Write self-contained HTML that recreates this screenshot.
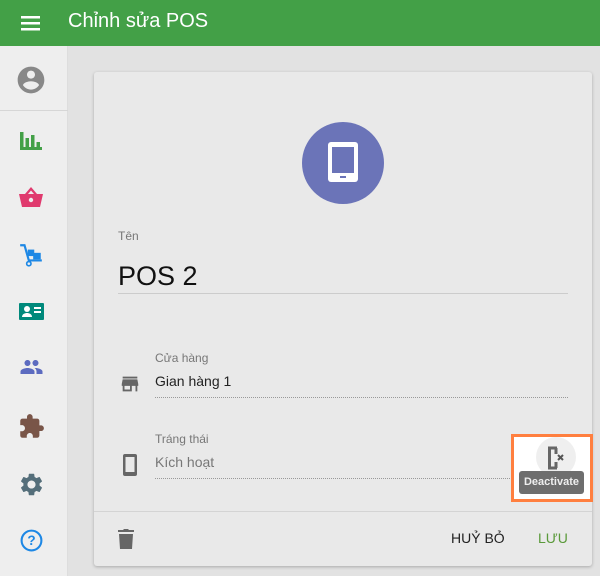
<!DOCTYPE html>
<html><head><meta charset="utf-8"><style>
*{box-sizing:border-box;margin:0;padding:0}
body{width:600px;height:576px;overflow:hidden;background:#e2e2e2;font-family:"Liberation Sans",sans-serif;position:relative}
.hdr{position:absolute;left:0;top:0;width:600px;height:46px;background:#43a047;color:#fff}
.hdr .t{position:absolute;left:68px;top:10px;font-size:20px}
.side{position:absolute;left:0;top:46px;width:68px;height:530px;background:#eeeeee;border-right:1px solid #ddd}
.side svg{position:absolute}
.card{position:absolute;left:94px;top:72px;width:498px;height:494px;background:#e9e9e9;border-radius:3px;box-shadow:0 1px 3px rgba(0,0,0,.25)}
.abs{position:absolute}
.lbl{font-size:12px;color:#777}
.dot{border-bottom:1px dotted #999}
</style></head><body>
<div class="hdr">
<svg class="abs" style="left:20px;top:12px" width="22" height="22" viewBox="0 0 22 22"><rect x="1" y="4" width="19" height="2.5" fill="#fff"/><rect x="1" y="10" width="19" height="2.5" fill="#fff"/><rect x="1" y="16" width="19" height="2.5" fill="#fff"/></svg>
<div class="t">Chỉnh sửa POS</div></div>
<div class="side">
<svg style="left:15px;top:18px" width="32" height="32" viewBox="0 0 24 24"><path fill="#888" d="M12 2C6.48 2 2 6.480 2 12s4.48 10 10 10 10-4.48 10-10S17.52 2 12 2zm0 3c1.66 0 3 1.34 3 3s-1.34 3-3 3-3-1.34-3-3 1.34-3 3-3zm0 14.2c-2.5 0-4.71-1.28-6-3.22.03-1.99 4-3.08 6-3.08 1.99 0 5.970 1.09 6 3.08-1.29 1.94-3.5 3.22-6 3.22z"/></svg>
<div class="abs" style="left:0;top:64px;width:68px;border-top:1px solid #d6d6d6"></div>
<svg style="left:19px;top:84px" width="24" height="22" viewBox="0 0 24 22"><path fill="#43a047" d="M1 2h3.5v18H1zM6.5 8h3.5v12H6.5zM12 5h3.5v15H12zM17.5 12h3.5v8h-3.5zM1 17h22v3H1z"/></svg>
<svg style="left:18px;top:140px" width="26" height="24" viewBox="0 0 26 24"><path fill="#e03a6e" d="M13 1l-6 7H1l3 13h18l3-13h-6zM10 8l3-3.5 3 3.5z"/><circle cx="13" cy="14" r="2.2" fill="#eee"/></svg>
<svg style="left:18px;top:196px" width="26" height="26" viewBox="0 0 24 24"><path fill="none" stroke="#1e88e5" stroke-width="2" d="M2 3h4l4 14h12"/><rect x="9" y="7" width="6" height="6" fill="#1e88e5"/><rect x="14" y="10" width="7" height="6" fill="#1e88e5"/><circle cx="10" cy="20" r="2" fill="none" stroke="#1e88e5" stroke-width="1.5"/></svg>
<svg style="left:19px;top:256px" width="25" height="20" viewBox="0 0 25 20"><rect x="0" y="1" width="25" height="17" rx="1" fill="#00897b"/><circle cx="8" cy="7" r="3" fill="#fff"/><path fill="#fff" d="M3 15c0-3 3-4 5-4s5 1 5 4z"/><rect x="15" y="5" width="7" height="2" fill="#fff"/><rect x="15" y="9" width="7" height="2" fill="#fff"/></svg>
<svg style="left:18px;top:309px" width="27" height="24" viewBox="0 0 24 24"><path fill="#5c6bc0" d="M16 11c1.66 0 3-1.34 3-3s-1.34-3-3-3-3 1.34-3 3 1.34 3 3 3zm-8 0c1.66 0 3-1.34 3-3S9.66 5 8 5 5 6.34 5 8s1.34 3 3 3zm0 2c-2.33 0-7 1.17-7 3.5V19h14v-2.5c0-2.33-4.67-3.5-7-3.5zm8 0c-.29 0-.62.02-.97.05 1.16.84 1.970 1.97 1.97 3.45V19h6v-2.5c0-2.33-4.67-3.5-7-3.5z"/></svg>
<svg style="left:18px;top:367px" width="27" height="27" viewBox="0 0 24 24"><path fill="#795548" d="M20.5 11H19V7c0-1.1-.9-2-2-2h-4V3.5C13 2.12 11.88 1 10.5 1S8 2.12 8 3.5V5H4c-1.1 0-1.99.9-1.99 2v3.8H3.5c1.49 0 2.7 1.21 2.7 2.7s-1.21 2.7-2.7 2.7H2V20c0 1.1.9 2 2 2h3.8v-1.5c0-1.49 1.21-2.7 2.7-2.7 1.49 0 2.7 1.21 2.7 2.7V22H17c1.1 0 2-.9 2-2v-4h1.5c1.38 0 2.5-1.12 2.5-2.5S21.88 11 20.5 11z"/></svg>
<svg style="left:18px;top:425px" width="27" height="27" viewBox="0 0 24 24"><path fill="#546e7a" d="M19.14 12.94c.04-.3.06-.61.06-.94 0-.32-.02-.64-.07-.94l2.03-1.58a.49.49 0 00.12-.61l-1.92-3.320a.49.49 0 00-.59-.22l-2.39.96c-.5-.38-1.03-.7-1.62-.94l-.36-2.54a.48.48 0 00-.48-.41h-3.84c-.24 0-.43.17-.47.41l-.36 2.54c-.59.24-1.13.57-1.62.94l-2.39-.96a.49.49 0 00-.59.22L2.74 8.870c-.12.21-.08.47.12.61l2.03 1.58c-.05.3-.09.63-.09.94s.02.64.07.94l-2.03 1.58a.49.49 0 00-.12.61l1.92 3.32c.12.22.37.29.59.22l2.39-.96c.5.38 1.03.7 1.62.94l.36 2.54c.05.24.24.41.48.41h3.84c.24 0 .44-.17.47-.41l.36-2.54c.59-.24 1.13-.56 1.62-.94l2.39.96c.22.08.47 0 .59-.22l1.92-3.32c.12-.22.07-.47-.12-.61l-2.01-1.58zM12 15.6c-1.98 0-3.6-1.62-3.6-3.6s1.62-3.6 3.6-3.6 3.6 1.62 3.6 3.6-1.62 3.6-3.6 3.6z"/></svg>
<svg style="left:19px;top:482px" width="25" height="25" viewBox="0 0 24 24"><circle cx="12" cy="12" r="9.5" fill="none" stroke="#1e88e5" stroke-width="2"/><text x="12" y="16.5" text-anchor="middle" font-family="Liberation Sans" font-weight="bold" font-size="13" fill="#1e88e5">?</text></svg>
</div>
<div class="card">
<div class="abs" style="left:208px;top:50px;width:82px;height:82px;border-radius:50%;background:#6b74b8"></div>
<svg class="abs" style="left:229px;top:68px" width="40" height="46" viewBox="0 0 40 46"><rect x="5" y="2" width="30" height="40" rx="3" fill="#fff"/><rect x="9" y="7" width="22" height="26" fill="#6b74b8"/><rect x="17" y="36" width="6" height="2" fill="#6b74b8"/></svg>
<div class="abs lbl" style="left:24px;top:157px">Tên</div>
<div class="abs" style="left:24px;top:189px;font-size:27px;color:#111">POS 2</div>
<div class="abs" style="left:24px;top:221px;width:450px;border-bottom:1px solid #ccc"></div>
<svg class="abs" style="left:25px;top:301px" width="22" height="22" viewBox="0 0 24 24"><path fill="#666" d="M20 4H4v2h16V4zm1 10v-2l-1-5H4l-1 5v2h1v6h10v-6h4v6h2v-6h1zm-9 4H6v-4h6v4z"/></svg>
<div class="abs lbl" style="left:61px;top:279px">Cửa hàng</div>
<div class="abs" style="left:61px;top:301px;font-size:14px;color:#222">Gian hàng 1</div>
<div class="abs dot" style="left:61px;top:325px;width:413px"></div>
<svg class="abs" style="left:26px;top:381px" width="20" height="24" viewBox="0 0 20 24"><rect x="3" y="1" width="14" height="22" rx="2" fill="#666"/><rect x="5.5" y="4" width="9" height="15" fill="#e9e9e9"/></svg>
<div class="abs lbl" style="left:61px;top:360px">Tráng thái</div>
<div class="abs" style="left:61px;top:382px;font-size:14px;color:#777">Kích hoạt</div>
<div class="abs dot" style="left:61px;top:406px;width:413px"></div>
<div class="abs" style="left:0;top:439px;width:498px;border-top:1px solid #d4d4d4"></div>
<svg class="abs" style="left:23px;top:456px" width="18" height="22" viewBox="0 0 18 22"><path fill="#666" d="M2 6h14l-1 15H3zM1 2h5l1-1h4l1 1h5v2H1z"/></svg>
<div class="abs" style="left:357px;top:458px;font-size:14px;color:#222">HUỶ BỎ</div>
<div class="abs" style="left:444px;top:458px;font-size:14px;color:#5a9a3a">LƯU</div>
</div>
<div class="abs" style="left:511px;top:434px;width:82px;height:68px;border:3px solid #ff7f3f;background:#fff"></div>
<div class="abs" style="left:536px;top:437px;width:40px;height:40px;border-radius:50%;background:#efefef"></div>
<svg class="abs" style="left:545px;top:445px" width="24" height="26" viewBox="0 0 24 26"><path fill="none" stroke="#666" stroke-width="3" d="M12 3H4.5v20H12M11 23V17M11 3v6"/><path stroke="#555" stroke-width="2" d="M13 10l5 5M18 10l-5 5"/></svg>
<div class="abs" style="left:519px;top:471px;width:65px;height:23px;background:#6e6e6e;border-radius:3px;color:#eee;font-size:11px;font-weight:bold;text-align:center;line-height:23px">Deactivate</div>
</body></html>
